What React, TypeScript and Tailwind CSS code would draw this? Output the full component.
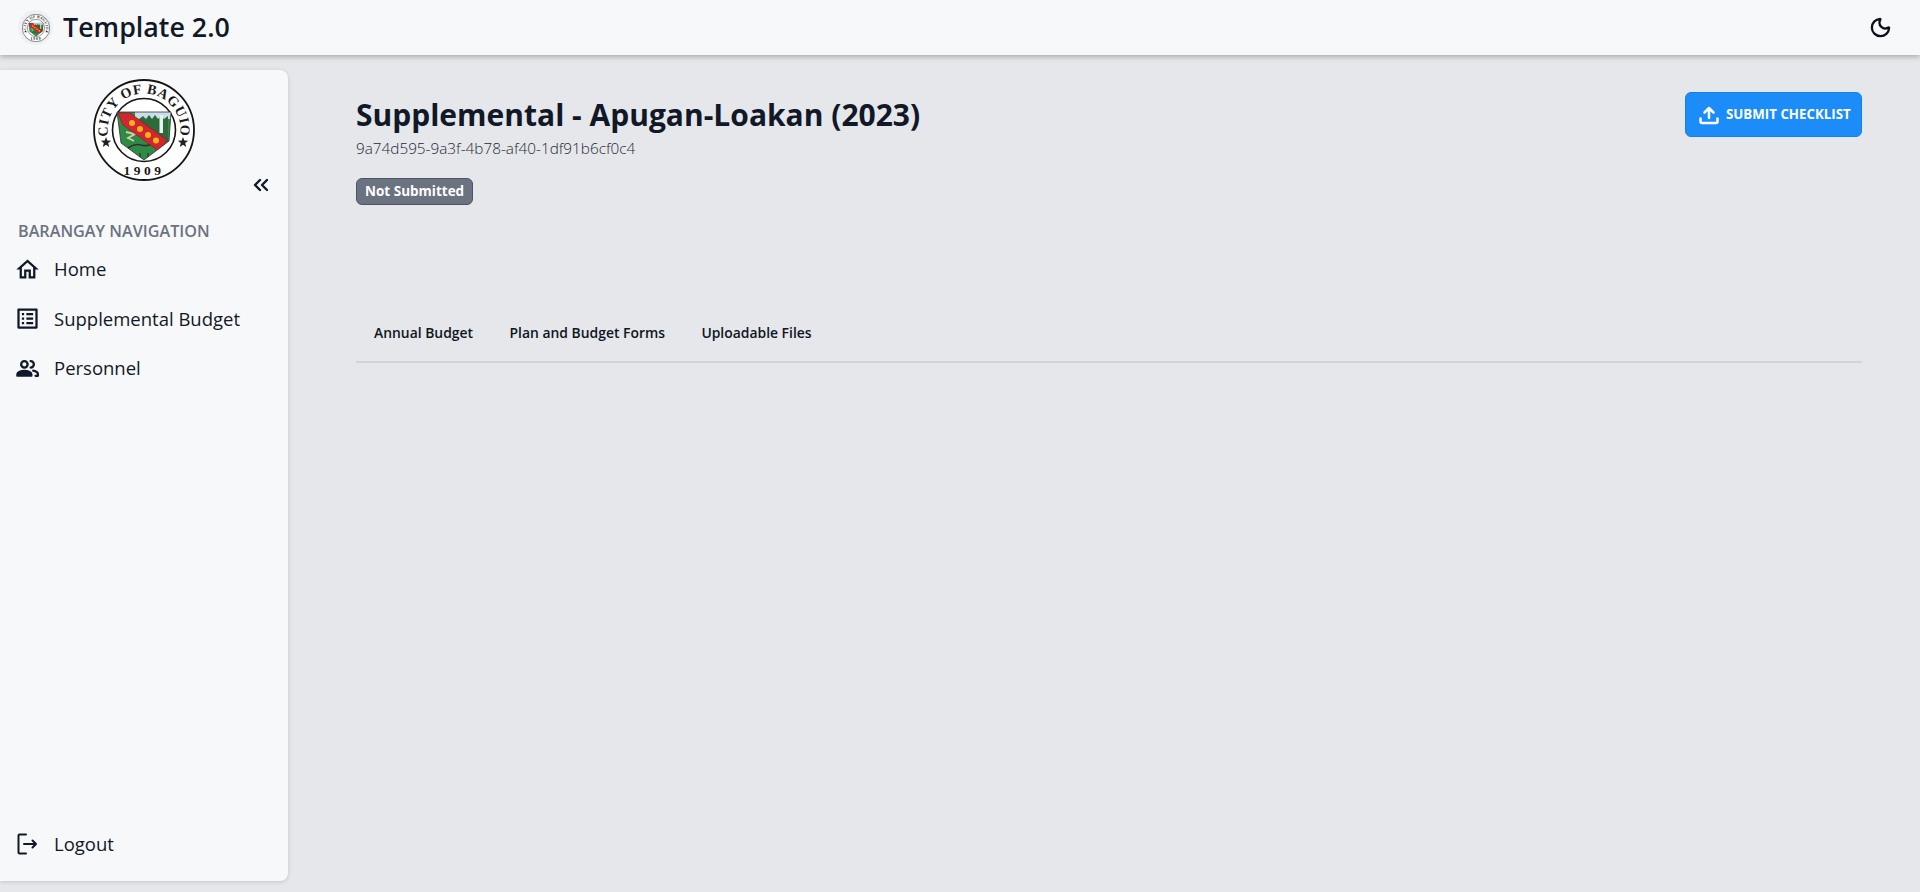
import { ChevronsLeft, Moon } from "lucide-react";
import { MdOutlineHome, MdOutlineListAlt } from "react-icons/md";

function Seal({ className }: { className: string }) {
  return (
    <svg viewBox="0 0 102 102" className={className}>
      <circle cx="51" cy="51" r="50" fill="#fff" stroke="#151515" strokeWidth="1.8" />
      <circle cx="51" cy="51" r="31.5" fill="#fff" stroke="#151515" strokeWidth="1.6" />
      <defs>
        <path id="sealTop" d="M 16.7 63.5 A 36.5 36.5 0 1 1 85.3 63.5" />
        <clipPath id="shield">
          <path d="M24 33 H78 L76 62 L51 81 L28 64 Z" />
        </clipPath>
      </defs>
      <text fontFamily="'Liberation Serif', serif" fontSize="14" fontWeight="700" fill="#1a1a1a" letterSpacing="0.7">
        <textPath href="#sealTop" startOffset="50%" textAnchor="middle">CITY OF BAGUIO</textPath>
      </text>
      <text x="51" y="96" textAnchor="middle" fontFamily="'Liberation Serif', serif" fontSize="13.5" fontWeight="700" fill="#1a1a1a" letterSpacing="3.5">1909</text>
      <path d="M13 58l1.3 3.6 3.9.1-3 2.4 1 3.8-3.2-2.2-3.2 2.2 1-3.8-3-2.4 3.9-.1z" fill="#222" />
      <path d="M90 58l1.3 3.6 3.9.1-3 2.4 1 3.8-3.2-2.2-3.2 2.2 1-3.8-3-2.4 3.9-.1z" fill="#222" />
      <g clipPath="url(#shield)">
        <rect x="24" y="32" width="54" height="50" fill="#2f8a46" />
        <rect x="42" y="32" width="36" height="8" fill="#c9dfe8" />
        <path d="M46 40l4-3 3 3 3-4 3 4 3-4 3 4 3-3 3 3 4-3v26H60z" fill="#2d6a3a" />
        <rect x="66.5" y="36" width="3.5" height="18" fill="#e8f0ee" />
        <path d="M33 53l9 2-7 4 6 3" fill="none" stroke="#d6cfa6" strokeWidth="1.8" />
        <path d="M35 69q7-5 13-3t13-2" fill="none" stroke="#333" strokeWidth="1.6" />
        <path d="M38 74h2v4h-2zM46 74h2v7h-2zM54 74h2v7h-2zM62 72h2v6h-2z" fill="#1f5a30" />
        <path d="M25 34 L37 34 L74 61 L67 73 L30 46 Z" fill="#d0262f" stroke="#7d1d20" strokeWidth="0.6" />
        <circle cx="39" cy="44" r="3" fill="#f6b21b" />
        <circle cx="47" cy="50" r="3" fill="#f6b21b" />
        <circle cx="55" cy="56" r="3" fill="#f6b21b" />
        <circle cx="63" cy="61.5" r="3" fill="#f6b21b" />
      </g>
      <path d="M24 33 H78 L76 62 L51 81 L28 64 Z" fill="none" stroke="#333" strokeWidth="0.8" />
    </svg>
  );
}

function NavItem({ icon, label }: { icon: React.ReactNode; label: string }) {
  return (
    <div className="flex h-[49.5px] items-center gap-[16px] pl-[16px] text-[18.5px] text-[#111827]">
      <span className="flex w-[22px] shrink-0 justify-center [&>svg]:shrink-0">{icon}</span>
      <span>{label}</span>
    </div>
  );
}

export default function App() {
  return (
    <div className="flex h-[892px] flex-col overflow-hidden bg-[#e5e7eb] font-['Open_Sans','Noto_Sans',sans-serif] text-[#111827]">
      <header className="z-10 flex h-[55px] shrink-0 items-center justify-between bg-[#f7f8fa] pl-[18px] pr-[28px] shadow-[0_2px_5px_rgba(0,0,0,0.25)]">
        <div className="flex items-center gap-[10px]">
          <span className="flex h-[35px] w-[35px] items-center justify-center rounded-full bg-[#eff0f3]">
            <Seal className="h-[28px] w-[28px]" />
          </span>
          <span className="text-[26.8px] font-semibold leading-none">Template 2.0</span>
        </div>
        <Moon size={23} strokeWidth={2.4} className="text-[#0b0f1a]" />
      </header>

      <div className="flex min-h-0 flex-1 pt-[15px] pb-[11px]">
        <aside className="flex w-[288px] shrink-0 flex-col rounded-r-lg bg-[#f7f8fa] shadow-[0_1px_4px_rgba(0,0,0,0.15)]">
          <div className="flex justify-center pt-[9px]">
            <Seal className="h-[102px] w-[102px]" />
          </div>
          <div className="flex justify-end pr-[15px]">
            <ChevronsLeft size={24} strokeWidth={2.4} className="-mt-[8px]" />
          </div>
          <div className="pl-[18px] pt-[24px] text-[16.2px] font-semibold leading-[20px] text-[#6b7280]">
            BARANGAY NAVIGATION
          </div>
          <nav className="pt-[3.5px]">
            <NavItem icon={<MdOutlineHome size={27} />} label="Home" />
            <NavItem icon={<MdOutlineListAlt size={27} />} label="Supplemental Budget" />
            <NavItem
              icon={
                <svg viewBox="0 0 24 24" width="25" height="25" fill="none" stroke="currentColor" strokeWidth="2.2" strokeLinejoin="round" strokeLinecap="round">
                  <circle cx="9" cy="8" r="3.1" />
                  <path d="M15 4.9a3.1 3.1 0 0 1 0 6.2" />
                  <path d="M2 19v-1.4c0-2.4 4-3.7 7-3.7s7 1.3 7 3.7V19z" fill="currentColor" strokeWidth="1.6" />
                  <path d="M17.5 14c2.5.4 4.5 1.6 4.5 3.6V19h-2.3" />
                </svg>
              }
              label="Personnel"
            />
          </nav>
          <div className="mt-auto pb-[12px]">
            <NavItem
              icon={
                <svg viewBox="0 0 22 22" width="22" height="22" fill="none" stroke="currentColor" strokeWidth="2" strokeLinecap="round" strokeLinejoin="round">
                  <path d="M10 1.5H3.5a1 1 0 0 0-1 1v17a1 1 0 0 0 1 1H10" />
                  <path d="M8 11h12M16.5 7.5 20 11l-3.5 3.5" />
                </svg>
              }
              label="Logout"
            />
          </div>
        </aside>

        <main className="min-w-0 flex-1 pl-[68px] pr-[58px] pt-[22px]">
          <div className="flex items-start justify-between">
            <div>
              <h1 className="pt-[2px] text-[30px] font-bold leading-[42px]">Supplemental - Apugan-Loakan (2023)</h1>
              <p className="pt-[2px] text-[15.3px] font-light leading-[20px] text-[#1f2937]">9a74d595-9a3f-4b78-af40-1df91b6cf0c4</p>
              <span className="mt-[20px] inline-flex h-[27px] items-center rounded-md border border-[#4b5563] bg-[#6b7280] px-[8px] text-[13.5px] font-bold text-white">
                Not Submitted
              </span>
            </div>
            <button className="flex h-[45px] w-[177px] items-center gap-[7px] rounded-md border border-[#1580ea] bg-[#1c8cf8] pl-[13px] text-[13.3px] font-bold uppercase text-white">
              <svg viewBox="0 0 20 20" width="20" height="20" fill="none" stroke="currentColor" strokeWidth="2.5" strokeLinecap="round" strokeLinejoin="round">
                <path d="M10 13V3M5.5 7.5 10 3l4.5 4.5" />
                <path d="M1.5 13.5v3a1.5 1.5 0 0 0 1.5 1.5h14a1.5 1.5 0 0 0 1.5-1.5v-3" />
              </svg>
              Submit Checklist
            </button>
          </div>

          <div className="mt-[102px] flex h-[56px] items-center gap-[36.5px] border-b-2 border-[#d1d5db] px-[18px] pb-[2px] text-[13.9px] font-semibold text-[#0f1521]">
            <span>Annual Budget</span>
            <span>Plan and Budget Forms</span>
            <span>Uploadable Files</span>
          </div>
        </main>
      </div>
    </div>
  );
}
